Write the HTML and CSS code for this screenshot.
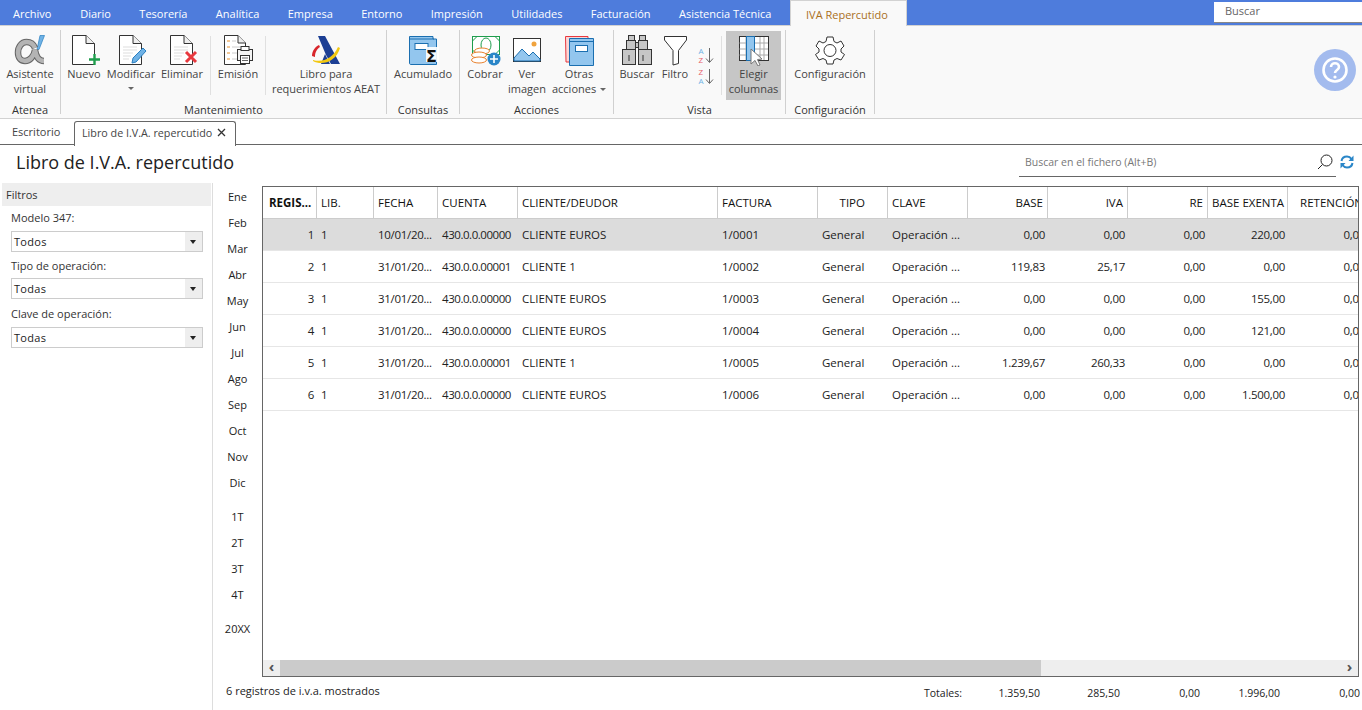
FILE: index.html
```html
<!DOCTYPE html>
<html lang="es">
<head>
<meta charset="utf-8">
<title>Libro de I.V.A. repercutido</title>
<link rel="stylesheet" href="styles.css">
</head>
<body>
<header class="menubar">
  <nav class="menu">
    <span class="menu-item m-archivo">Archivo</span>
    <span class="menu-item">Diario</span>
    <span class="menu-item">Tesorería</span>
    <span class="menu-item">Analítica</span>
    <span class="menu-item">Empresa</span>
    <span class="menu-item">Entorno</span>
    <span class="menu-item">Impresión</span>
    <span class="menu-item">Utilidades</span>
    <span class="menu-item">Facturación</span>
    <span class="menu-item">Asistencia Técnica</span>
    <span class="menu-item active">IVA Repercutido</span>
  </nav>
  <div class="top-search">Buscar</div>
</header>

<section class="ribbon">
  <div class="group g-atenea">
    <div class="group-body">
      <div class="rbtn w60">
        <svg class="ico" width="32" height="32" viewBox="0 0 32 32"><path d="M26 1.500h4.500L25 15.500h-2z" fill="#6fb2e6" stroke="#2a7fc0" stroke-width=".7"/><path d="M21 14C19.500 10 16 8 12.500 8 7.500 8 4 13 4 18.500 4 24 7 27 11 27 16 27 20 22 21 16 22 22 24 27 30 27" fill="none" stroke="#666" stroke-width="6.500"/><path d="M21 14C19.500 10 16 8 12.500 8 7.500 8 4 13 4 18.500 4 24 7 27 11 27 16 27 20 22 21 16 22 22 24 27 30 27" fill="none" stroke="#b4b4b4" stroke-width="4.500"/></svg>
        <span class="lbl">Asistente<br>virtual</span>
      </div>
    </div>
    <div class="group-name">Atenea</div>
  </div>

  <div class="group g-mant">
    <div class="group-body">
      <div class="rbtn w38">
        <svg class="ico" width="32" height="32" viewBox="0 0 32 32"><path d="M4.500 1.500H18L26.500 9.500V30.500H4.500Z" fill="#fff" stroke="#333"/><path d="M18 1.500V9.500H26.500" fill="#eee" stroke="#333"/><path d="M26.500 20V31M21 25.500H33" stroke="#1f9d4d" stroke-width="2.400" fill="none"/></svg>
        <span class="lbl">Nuevo</span>
      </div>
      <div class="rbtn w56">
        <svg class="ico" width="32" height="32" viewBox="0 0 32 32"><path d="M4.500 1.500H18L26.500 9.500V30.500H4.500Z" fill="#fff" stroke="#333"/><path d="M18 1.500V9.500H26.500" fill="#eee" stroke="#333"/><path d="M8 13H22M8 16H22M8 19H18M8 22H16M8 25H14" stroke="#ddd"/><path d="M17 29l1-5L28 14l3 3L21 28z" fill="#6fb2e6" stroke="#2a7fc0"/></svg>
        <span class="lbl">Modificar</span>
        <span class="caret"></span>
      </div>
      <div class="rbtn w46">
        <svg class="ico" width="32" height="32" viewBox="0 0 32 32"><path d="M4.500 1.500H18L26.500 9.500V30.500H4.500Z" fill="#fff" stroke="#333"/><path d="M18 1.500V9.500H26.500" fill="#eee" stroke="#333"/><path d="M8 13H22M8 16H22M8 19H18M8 22H16M8 25H14" stroke="#ddd"/><path d="M20 18L30 28M30 18L20 28" stroke="#e8393f" stroke-width="3" fill="none"/></svg>
        <span class="lbl">Eliminar</span>
      </div>
      <i class="vsep first"></i>
      <div class="rbtn w50">
        <svg class="ico" width="32" height="32" viewBox="0 0 32 32"><path d="M2.500 1.500H16L23.500 9V30.500H2.500Z" fill="#fff" stroke="#333"/><path d="M16 1.500V9H23.500" fill="#eee" stroke="#333"/><path d="M5 7H8M5 13H8M5 19H8M5 25H8" stroke="#e8912d"/><path d="M10 7H14M10 13H18M10 19H15M10 25H15" stroke="#ccc"/><rect x="15.500" y="15.500" width="15" height="11" fill="#f4f4f4" stroke="#333"/><rect x="19" y="12.500" width="8" height="4" fill="#fff" stroke="#333"/><rect x="18.500" y="21.500" width="9" height="8" fill="#fff" stroke="#333"/><path d="M20 24H26M20 26.500H26" stroke="#666"/></svg>
        <span class="lbl">Emisión</span>
      </div>
      <i class="vsep"></i>
      <div class="rbtn w116">
        <svg class="ico" width="32" height="32" viewBox="0 0 32 32"><path d="M6 2H15L30 30H21L16 21 8 2z" fill="#1c3f94"/><path d="M15 20l-4 10h9z" fill="#1c3f94"/><path d="M2 22c0-5 3-9 7-11l1 2c-3 2-5 5-5 10z" fill="#d8262c"/><path d="M3 26c10 3 20-2 25-13l2 1C26 28 12 32 3 27z" fill="#f2c811"/></svg>
        <span class="lbl">Libro para<br>requerimientos AEAT</span>
      </div>
    </div>
    <div class="group-name">Mantenimiento</div>
  </div>

  <div class="group g-cons">
    <div class="group-body">
      <div class="rbtn w71">
        <svg class="ico" width="32" height="32" viewBox="0 0 32 32"><path d="M2.500 2.500H26V5H29.500V30.500H4C3 30.500 2.500 30 2.500 29Z" fill="#93c6ee" stroke="#1b6fb0"/><path d="M2.500 5H27" stroke="#1b6fb0"/><rect x="8" y="9.500" width="13" height="6" fill="#fff" stroke="#1b6fb0"/><rect x="19" y="13" width="13" height="15" fill="#fff" opacity=".9"/><text class="sigma" x="19" y="28">Σ</text></svg>
        <span class="lbl">Acumulado</span>
      </div>
    </div>
    <div class="group-name">Consultas</div>
  </div>

  <div class="group g-acc">
    <div class="group-body">
      <div class="rbtn w42">
        <svg class="ico" width="32" height="32" viewBox="0 0 32 32"><rect x="3.500" y="2.500" width="27" height="18" fill="#fff" stroke="#1f9d4d"/><path d="M3.500 7L8 2.500M26 2.500L30.500 7M3.500 16L8 20.500M26 20.500L30.500 16" stroke="#1f9d4d"/><ellipse cx="17" cy="11" rx="5" ry="7" fill="none" stroke="#1f9d4d"/><ellipse cx="13" cy="17" rx="7.500" ry="3" fill="#fff" stroke="#e8812d"/><ellipse cx="10" cy="21" rx="7.500" ry="3" fill="#fff" stroke="#e8812d"/><ellipse cx="10" cy="26" rx="7.500" ry="3" fill="#fff" stroke="#e8812d"/><circle cx="25" cy="25" r="6.500" fill="#2a86c8"/><path d="M25 21V29M21 25H29" stroke="#fff" stroke-width="1.600"/></svg>
        <span class="lbl">Cobrar</span>
      </div>
      <div class="rbtn w42">
        <svg class="ico" width="32" height="32" viewBox="0 0 32 32"><rect x="2.500" y="4.500" width="27" height="23" fill="#fff" stroke="#333"/><path d="M3 24L11 15 18 22 22 18 29 25V27H3Z" fill="#93c6ee" stroke="#1b6fb0"/><circle cx="23" cy="10" r="2.500" fill="#f0a33e"/></svg>
        <span class="lbl">Ver<br>imagen</span>
      </div>
      <div class="rbtn w62">
        <svg class="ico" width="32" height="32" viewBox="0 0 32 32"><path d="M2.500 2.500H25V28H3z" fill="#fbd6d6" stroke="#e8393f"/><path d="M6.500 4.500H30.500V31.500H6.500Z" fill="#93c6ee" stroke="#1b6fb0"/><path d="M6.500 7.500H30.500" stroke="#1b6fb0"/><rect x="12.500" y="11.500" width="12" height="6" fill="#fff" stroke="#1b6fb0"/></svg>
        <span class="lbl">Otras<br>acciones <i class="caret inline"></i></span>
      </div>
    </div>
    <div class="group-name">Acciones</div>
  </div>

  <div class="group g-vista">
    <div class="group-body">
      <div class="rbtn w38">
        <svg class="ico" width="32" height="32" viewBox="0 0 32 32"><g fill="#c6c6c6" stroke="#333"><rect x="7.500" y="1.500" width="6" height="5"/><rect x="18.500" y="1.500" width="6" height="5"/><rect x="5.500" y="6.500" width="9" height="9"/><rect x="17.500" y="6.500" width="9" height="9"/><rect x="1.500" y="15.500" width="13" height="15"/><rect x="17.500" y="15.500" width="13" height="15"/><rect x="14.500" y="8.500" width="3" height="5"/></g><path d="M8 21V27M22 21V27" stroke="#333"/></svg>
        <span class="lbl">Buscar</span>
      </div>
      <div class="rbtn w38">
        <svg class="ico" width="32" height="32" viewBox="0 0 32 32"><path d="M5.500 2.500H27.500V6L19.500 16.500V29.500L14 31V16.500L5.500 6Z" fill="#fff" stroke="#333"/></svg>
        <span class="lbl">Filtro</span>
      </div>
      <div class="sort">
        <svg width="18" height="18" viewBox="0 0 18 18"><text class="az a" x="1.500" y="7">A</text><text class="az z" x="1.500" y="15.500">Z</text><path d="M12.500 1V15M9 11.500L12.500 15.500 16 11.500" fill="none" stroke="#666"/></svg>
        <svg width="18" height="18" viewBox="0 0 18 18"><text class="az z" x="1.500" y="7">Z</text><text class="az a" x="1.500" y="15.500">A</text><path d="M12.500 1V15M9 11.500L12.500 15.500 16 11.500" fill="none" stroke="#666"/></svg>
      </div>
      <i class="vsep narrow"></i>
      <div class="rbtn w55 selected">
        <svg class="ico" width="32" height="32" viewBox="0 0 32 32"><rect x="1.500" y="2.500" width="29" height="24" fill="#fff" stroke="#333"/><path d="M1.500 9H30M1.500 15H30M1.500 21H30M8 3V26M22 3V26M26 3V26" stroke="#aaa"/><rect x="8.500" y="2.500" width="8" height="24" fill="#93c6ee" stroke="#1b6fb0"/><path d="M13 15V30L17 26.500 20 32 22 31 19.500 25.500 24 25Z" fill="#fff" stroke="#777"/></svg>
        <span class="lbl">Elegir<br>columnas</span>
      </div>
    </div>
    <div class="group-name">Vista</div>
  </div>

  <div class="group g-conf">
    <div class="group-body">
      <div class="rbtn w88">
        <svg class="ico" width="32" height="32" viewBox="0 0 32 32"><path d="M13 3H19L20 7.500 23 9 27 7 30 12 27 15V18L30.500 20.500 27 26 23 24.500 20 26 19 30H13L12 26 9 24.500 5 26 1.500 20.500 5 18V15L2 12 5 7 9 9 12 7.500Z" fill="#fff" stroke="#333"/><circle cx="16" cy="16.500" r="6" fill="none" stroke="#333"/></svg>
        <span class="lbl">Configuración</span>
      </div>
    </div>
    <div class="group-name">Configuración</div>
  </div>

  <div class="help"><svg width="42" height="42" viewBox="0 0 42 42"><circle cx="21" cy="21" r="21" fill="#a3bbee"/><circle cx="21" cy="21" r="11.500" fill="none" stroke="#fff" stroke-width="2.600"/><path d="M17 18c0-5 8-5 8 0 0 3-4 3-4 6" fill="none" stroke="#fff" stroke-width="2.600"/><circle cx="21" cy="28" r="1.600" fill="#fff"/></svg></div>
</section>

<div class="doc-tabs">
  <span class="doc-tab">Escritorio</span>
  <span class="doc-tab open">Libro de I.V.A. repercutido <svg width="9" height="9" viewBox="0 0 9 9"><path d="M1 1L8 8M8 1L1 8" stroke="#333" stroke-width="1.300"/></svg></span>
</div>

<div class="title-row">
  <h1>Libro de I.V.A. repercutido</h1>
  <div class="file-search">
    <span>Buscar en el fichero (Alt+B)</span>
    <svg width="16" height="16" viewBox="0 0 16 16"><circle cx="9.500" cy="6.500" r="5.500" fill="none" stroke="#222"/><path d="M5.500 10.500L1 15" stroke="#222"/></svg>
  </div>
  <svg class="refresh" width="14" height="14" viewBox="0 0 14 14"><path d="M1.500 6C2 3 4.500 1.500 7 1.500c2 0 3.500 1 4.500 2.500M12.500 8C12 11 9.500 12.500 7 12.500c-2 0-3.500-1-4.500-2.500" fill="none" stroke="#2a86c8" stroke-width="2"/><path d="M13.500 0.500V6H8.500ZM.5 13.500V8H5.500Z" fill="#2a86c8"/></svg>
</div>

<main class="content">
  <aside class="filters">
    <div class="filters-head">Filtros</div>
    <label class="f-label l1">Modelo 347:</label>
    <div class="select"><span>Todos</span><b></b></div>
    <label class="f-label l2">Tipo de operación:</label>
    <div class="select"><span>Todas</span><b></b></div>
    <label class="f-label l3">Clave de operación:</label>
    <div class="select"><span>Todas</span><b></b></div>
  </aside>

  <div class="workspace">
    <div class="work-main">
      <div class="periods">
        <span>Ene</span><span>Feb</span><span>Mar</span><span>Abr</span><span>May</span><span>Jun</span><span>Jul</span><span>Ago</span><span>Sep</span><span>Oct</span><span>Nov</span><span>Dic</span>
        <span class="gap">1T</span><span>2T</span><span>3T</span><span>4T</span>
        <span class="gap">20XX</span>
      </div>
      <div class="grid">
        <div class="grid-scroll">
          <table>
            <colgroup><col class="c1"><col class="c2"><col class="c3"><col class="c4"><col class="c5"><col class="c6"><col class="c7"><col class="c8"><col class="c9"><col class="c9"><col class="c9"><col class="c9"><col class="c9"></colgroup>
            <thead>
              <tr><th class="strong">REGIS...</th><th>LIB.</th><th>FECHA</th><th>CUENTA</th><th>CLIENTE/DEUDOR</th><th>FACTURA</th><th class="tipo">TIPO</th><th>CLAVE</th><th class="n">BASE</th><th class="n">IVA</th><th class="n">RE</th><th>BASE EXENTA</th><th class="n">RETENCIÓN</th></tr>
            </thead>
            <tbody>
              <tr class="sel"><td class="n">1</td><td>1</td><td class="nar">10/01/20...</td><td class="nar2">430.0.0.00000</td><td>CLIENTE EUROS</td><td>1/0001</td><td class="tipo">General</td><td>Operación ...</td><td class="n">0,00</td><td class="n">0,00</td><td class="n">0,00</td><td class="n">220,00</td><td class="n">0,00</td></tr>
              <tr><td class="n">2</td><td>1</td><td class="nar">31/01/20...</td><td class="nar2">430.0.0.00001</td><td>CLIENTE 1</td><td>1/0002</td><td class="tipo">General</td><td>Operación ...</td><td class="n">119,83</td><td class="n">25,17</td><td class="n">0,00</td><td class="n">0,00</td><td class="n">0,00</td></tr>
              <tr><td class="n">3</td><td>1</td><td class="nar">31/01/20...</td><td class="nar2">430.0.0.00000</td><td>CLIENTE EUROS</td><td>1/0003</td><td class="tipo">General</td><td>Operación ...</td><td class="n">0,00</td><td class="n">0,00</td><td class="n">0,00</td><td class="n">155,00</td><td class="n">0,00</td></tr>
              <tr><td class="n">4</td><td>1</td><td class="nar">31/01/20...</td><td class="nar2">430.0.0.00000</td><td>CLIENTE EUROS</td><td>1/0004</td><td class="tipo">General</td><td>Operación ...</td><td class="n">0,00</td><td class="n">0,00</td><td class="n">0,00</td><td class="n">121,00</td><td class="n">0,00</td></tr>
              <tr><td class="n">5</td><td>1</td><td class="nar">31/01/20...</td><td class="nar2">430.0.0.00001</td><td>CLIENTE 1</td><td>1/0005</td><td class="tipo">General</td><td>Operación ...</td><td class="n">1.239,67</td><td class="n">260,33</td><td class="n">0,00</td><td class="n">0,00</td><td class="n">0,00</td></tr>
              <tr><td class="n">6</td><td>1</td><td class="nar">31/01/20...</td><td class="nar2">430.0.0.00000</td><td>CLIENTE EUROS</td><td>1/0006</td><td class="tipo">General</td><td>Operación ...</td><td class="n">0,00</td><td class="n">0,00</td><td class="n">0,00</td><td class="n">1.500,00</td><td class="n">0,00</td></tr>
            </tbody>
          </table>
        </div>
        <div class="hscroll">
          <span class="arrow">‹</span>
          <span class="thumb"></span>
          <span class="arrow right">›</span>
        </div>
      </div>
    </div>
    <footer class="status">
      <span class="count">6 registros de i.v.a. mostrados</span>
      <span class="tot-label">Totales:</span>
      <span class="tot">1.359,50</span><span class="tot">285,50</span><span class="tot">0,00</span><span class="tot">1.996,00</span><span class="tot">0,00</span>
    </footer>
  </div>
</main>
</body>
</html>
```

FILE: styles.css
```css
* { box-sizing: border-box; }
html, body { margin: 0; height: 710px; overflow: hidden; }
body {
  width: 1362px;
  background: #fff;
  color: #222;
  font-family: "Open Sans", "Noto Sans", "Liberation Sans", sans-serif;
  font-size: 11px;
  display: flex;
  flex-direction: column;
}

/* top menu */
.menubar {
  height: 26px;
  background: #4e7cdc;
  border-bottom: 1px solid #d2d2d2;
  display: flex;
  justify-content: space-between;
  flex: none;
}
.menu { display: flex; width: 907px; }
.menu-item {
  color: #fff;
  height: 25px;
  line-height: 28px;
  padding: 0 14.2px;
  flex: none;
}
.m-archivo { padding: 0 13px; width: 66px; }
.menu-item.active {
  margin-left: auto;
  background: #f9f9f9;
  color: #a9701c;
  border: 1px solid #d2d2d2;
  border-bottom: 0;
  padding: 0 15px;
  height: 26px;
  line-height: 27px;
  width: 117px;
}
.top-search {
  width: 148px;
  height: 21px;
  margin-top: 2px;
  background: #fff;
  border-bottom: 1px solid #888;
  color: #666;
  padding: 1px 11px;
  line-height: 16px;
}

/* ribbon */
.ribbon {
  height: 93px;
  flex: none;
  background: #f9f9f9;
  border-bottom: 1px solid #d2d2d2;
  display: flex;
  padding-top: 4px;
  position: relative;
}
.group {
  height: 84px;
  flex: none;
  border-right: 1px solid #d0d0d0;
  display: flex;
  flex-direction: column;
  color: #444;
}
.group-body { display: flex; height: 73px; flex: none; align-items: flex-start; }
.group-name { text-align: center; line-height: 14px; height: 14px; flex: none; color: #333; }
.g-atenea { width: 61px; }
.g-mant { width: 326px; padding-left: 4px; }
.g-cons { width: 73px; }
.g-acc { width: 154px; padding-left: 4px; }
.g-vista { width: 172px; padding-left: 4px; }
.g-conf { width: 89px; }
.g-mant .group-name, .g-acc .group-name, .g-vista .group-name { margin-left: -4px; }

.rbtn {
  display: flex;
  flex-direction: column;
  align-items: center;
  text-align: center;
  height: 70px;
  padding-top: 4px;
  flex: none;
}
.ico { display: block; margin-bottom: 0; flex: none; }
.lbl { line-height: 15px; white-space: nowrap; }
.w38 { width: 38px; }
.w42 { width: 42px; }
.w46 { width: 46px; }
.w50 { width: 50px; }
.w55 { width: 55px; }
.w56 { width: 56px; }
.w60 { width: 60px; }
.w62 { width: 62px; }
.w71 { width: 72px; }
.w88 { width: 88px; }
.w116 { width: 116px; }
.rbtn.selected { background: #c6c6c6; margin-top: 1px; height: 69px; padding-top: 3px; }

.caret {
  display: block;
  width: 0;
  height: 0;
  margin-top: 6px;
  border: 3px solid transparent;
  border-top: 3px solid #666;
  border-bottom: 0;
}
.caret.inline { display: inline-block; margin: 0 0 2px 1px; vertical-align: middle; }

.vsep {
  flex: none;
  width: 1px;
  height: 59px;
  margin: 6px 2px 0;
  background: #e0e0e0;
}
.vsep.first { margin-left: 5px; }
.vsep.narrow { margin: 6px 4px 0 3px; }

.sort {
  width: 24px;
  flex: none;
  padding: 17px 0 0 3px;
  display: flex;
  flex-direction: column;
  gap: 3px;
}
.sort svg { display: block; overflow: visible; }
.az { font: 8px "Open Sans", sans-serif; }
.az.a { fill: #6fb2e6; }
.az.z { fill: #e8606a; }
.sigma { font: bold 16px "DejaVu Sans", sans-serif; fill: #111; }

.help { position: absolute; left: 1314px; top: 23px; width: 42px; height: 42px; }

/* document tabs */
.doc-tabs {
  height: 26px;
  flex: none;
  border-bottom: 1px solid #666;
  display: flex;
  padding-top: 2px;
}
.doc-tab {
  color: #444;
  padding: 0 12px;
  line-height: 22px;
  height: 24px;
  width: 74px;
}
.doc-tab.open {
  width: 162px;
  height: 25px;
  background: #fff;
  border: 1px solid #666;
  border-bottom: 0;
  border-radius: 3px 3px 0 0;
  padding: 0 7px;
  white-space: nowrap;
  font-size: 10.75px;
}
.doc-tab svg { margin-left: 2px; }

/* title */
.title-row {
  height: 38px;
  flex: none;
  display: flex;
  align-items: flex-start;
  padding-left: 16px;
}
h1 {
  margin: 5px 0 0;
  font-size: 18px;
  font-weight: 400;
  line-height: 24px;
  width: 1003px;
  color: #222;
}
.file-search {
  width: 317px;
  height: 27px;
  margin-top: 5px;
  border-bottom: 1px solid #666;
  display: flex;
  align-items: center;
  justify-content: space-between;
  padding: 0 3px 2px 6px;
  color: #777;
  font-size: 10.5px;
}
.refresh { margin: 10px 0 0 4px; }

/* content */
.content { flex: 1; display: flex; min-height: 0; }
.filters {
  width: 213px;
  flex: none;
  border-right: 1px solid #ddd;
  padding-left: 2px;
}
.filters-head {
  background: #eee;
  width: 209px;
  height: 23px;
  line-height: 23px;
  padding-left: 4px;
  color: #333;
}
.f-label { display: block; margin-left: 9px; line-height: 16px; color: #333; }
.f-label.l1 { margin-top: 4px; margin-bottom: 5px; }
.f-label.l2 { margin-top: 6px; margin-bottom: 4px; }
.f-label.l3 { margin-top: 7px; margin-bottom: 5px; }
.select {
  width: 192px;
  height: 21px;
  margin-left: 9px;
  border: 1px solid #ccc;
  display: flex;
  justify-content: space-between;
  color: #222;
  background: #fff;
}
.select span { padding-left: 2px; line-height: 20px; letter-spacing: .3px; }
.select b {
  width: 17px;
  background: #eee;
  position: relative;
}
.select b::after {
  content: "";
  position: absolute;
  left: 5px;
  top: 8px;
  border: 3px solid transparent;
  border-top: 4px solid #222;
  border-bottom: 0;
}

.workspace { flex: 1; min-width: 0; display: flex; flex-direction: column; }
.work-main { display: flex; height: 495px; flex: none; }
.periods {
  width: 49px;
  flex: none;
  padding-top: 1px;
  display: flex;
  flex-direction: column;
  align-items: center;
}
.periods span { height: 26px; line-height: 26px; flex: none; color: #222; }
.periods span.gap { margin-top: 8px; }

.grid {
  width: 1097px;
  height: 491px;
  margin-top: 3px;
  border: 1px solid #666;
  display: flex;
  flex-direction: column;
}
.grid-scroll { flex: 1; overflow: hidden; min-height: 0; }
table {
  border-collapse: separate;
  border-spacing: 0;
  table-layout: fixed;
  width: 1104px;
  font-size: 11.5px;
}
.c1 { width: 54px; } .c2 { width: 57px; } .c3 { width: 64px; } .c4 { width: 80px; }
.c5 { width: 200px; } .c6 { width: 100px; } .c7 { width: 70px; } .c8 { width: 80px; } .c9 { width: 80px; }
th, td {
  padding: 0 4px;
  text-align: left;
  font-weight: 400;
  white-space: nowrap;
  overflow: hidden;
  color: #222;
}
th {
  height: 32px;
  border-right: 1px solid #ccc;
  border-bottom: 1px solid #ccc;
  color: #111;
}
th.strong { font-weight: 700; padding-left: 6px; }
td { height: 32px; border-bottom: 1px solid #e6e6e6; }
.n { text-align: right; }
td.n { padding-right: 3px; letter-spacing: -.3px; }
td.nar { letter-spacing: -.3px; }
td.nar2 { letter-spacing: -.45px; }
.tipo { text-align: right; }
td.tipo { padding-right: 27px; }
th.tipo { padding-right: 22px; }
.sel td { background: #dcdcdc; }

.hscroll {
  height: 16px;
  flex: none;
  background: #eee;
  display: flex;
  align-items: center;
  justify-content: space-between;
  position: relative;
}
.arrow {
  width: 17px;
  height: 16px;
  text-align: center;
  font-weight: 700;
  font-size: 15px;
  line-height: 13px;
  color: #555;
  flex: none;
}
.thumb { width: 761px; height: 16px; background: #cbcbcb; flex: none; margin-right: auto; }

.status { flex: 1; display: flex; padding-left: 13px; color: #222; }
.count { width: 698px; padding-top: 5px; line-height: 16px; font-size: 11px; }
.tot-label { width: 40px; padding-top: 7px; line-height: 16px; font-size: 10.5px; }
.tot { width: 80px; text-align: right; padding-top: 7px; line-height: 16px; font-size: 10.5px; flex: none; }
.tot-label + .tot { width: 76px; }
```
